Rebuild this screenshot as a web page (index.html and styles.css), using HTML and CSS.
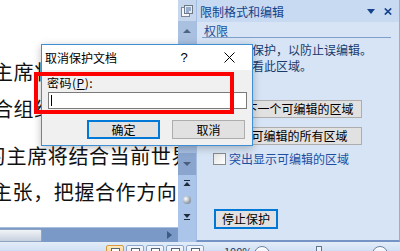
FILE: index.html
```html
<!DOCTYPE html>
<html>
<head>
<meta charset="utf-8">
<link rel="stylesheet" href="styles.css">
</head>
<body>
<div class="window">
  <div class="main">
    <div class="docwrap">
      <div class="doc">
        <div class="line l1">主席将出席上海合作</div>
        <div class="line l2">合组织成员国元首理事</div>
        <div class="line l3">习主席将结合当前世界</div>
        <div class="line l4">主张，把握合作方向，</div>
      </div>
      <div class="hscroll">
        <div class="hthumb"></div>
        <div class="harrow"></div>
      </div>
    </div>
    <div class="vscroll">
      <div class="vs-top">
        <svg width="12" height="12" viewBox="0 0 12 12">
          <rect x="0.5" y="2.5" width="8" height="9" fill="#f4f6f9" stroke="#7d8794"/>
          <rect x="3.5" y="0.5" width="8" height="8" fill="#e6ebf2" stroke="#6f7a88"/>
          <path d="M5 3h5M5 5h5M5 7h3" stroke="#4a6fa5" stroke-width="1"/>
        </svg>
      </div>
      <div class="vs-up"><div class="tri-up"></div></div>
      <div class="vs-track"></div>
      <div class="vs-down"><div class="tri-down"></div></div>
      <div class="vs-browse">
        <svg class="br br-prev" width="8" height="7" viewBox="0 0 8 7">
          <rect x="1" y="0" width="6" height="1" fill="#1d2a3a"/>
          <path d="M4 2L7.5 6H0.5Z" fill="#1d2a3a"/>
        </svg>
        <div class="br-dot"></div>
        <svg class="br br-next" width="8" height="7" viewBox="0 0 8 7">
          <path d="M0.5 0H7.5L4 4Z" fill="#1d2a3a"/>
          <rect x="1" y="5" width="6" height="1" fill="#1d2a3a"/>
        </svg>
      </div>
    </div>
    <div class="panel">
      <div class="ptitle">
        <span class="ptitle-text">限制格式和编辑</span>
        <span class="pt-menu"></span>
        <svg class="pt-close" width="8" height="7" viewBox="0 0 8 7">
          <path d="M0.8 0.5L7.2 6.5M7.2 0.5L0.8 6.5" stroke="#15428b" stroke-width="1.7"/>
        </svg>
      </div>
      <div class="psec">权限</div>
      <div class="ptext">
        <div>此文档受保护，以防止误编辑。</div>
        <div>您只能查看此区域。</div>
      </div>
      <button class="pbtn pbtn1">查找下一个可编辑的区域</button>
      <button class="pbtn pbtn2">显示可编辑的所有区域</button>
      <div class="pcheck">
        <span class="chk"></span>
        <span class="chk-label">突出显示可编辑的区域</span>
      </div>
      <button class="stopbtn">停止保护</button>
    </div>
  </div>
  <div class="status">
    <div class="st-left"></div>
    <div class="st-views">
      <div class="view on"><div class="vi"></div></div>
      <div class="view"><div class="vi"></div></div>
      <div class="view"><div class="vi"></div></div>
      <div class="view"><div class="vi"></div></div>
      <div class="view"><div class="vi"></div></div>
    </div>
    <div class="st-zoom">
      <span class="zt">100%</span>
      <span class="zc"></span>
      <span class="zthumb"></span>
      <span class="zc zc2"></span>
    </div>
  </div>
</div>

<div class="dialog">
  <div class="dtitle">
    <span class="dtitle-text">取消保护文档</span>
    <span class="dhelp">?</span>
    <span class="dclose">
      <svg width="11" height="11" viewBox="0 0 11 11">
        <path d="M0.5 0.5L10.5 10.5M10.5 0.5L0.5 10.5" stroke="#000" stroke-width="1"/>
      </svg>
    </span>
  </div>
  <div class="dbody">
    <div class="dlabel">密码(<u>P</u>):</div>
    <div class="dinput"><div class="caret"></div></div>
    <div class="dbtns">
      <button class="dbtn dbtn-default">确定</button>
      <button class="dbtn">取消</button>
    </div>
  </div>
</div>

<div class="highlight"></div>
</body>
</html>
```

FILE: styles.css
```css
* { box-sizing: border-box; }
html, body { margin: 0; padding: 0; }
body {
  width: 400px;
  height: 251px;
  overflow: hidden;
  position: relative;
  font-family: "Noto Sans CJK SC", "Noto Sans", sans-serif;
  background: #d6e4f5;
}
button { font-family: inherit; padding: 0; margin: 0; cursor: default; }

.window { display: flex; flex-direction: column; width: 400px; height: 251px; }
.main { display: flex; height: 242px; background: #d6e4f5; }

/* document */
.docwrap { width: 178px; display: flex; flex-direction: column; }
.doc { flex: 1; background: #fff; overflow: hidden; padding-top: 62px; }
.line {
  font-size: 20px;
  line-height: 20px;
  height: 20px;
  white-space: nowrap;
  letter-spacing: 0.6px;
  color: #111;
}
.l1 { margin-left: -7px; }
.l2 { margin-left: -7px; margin-top: 17px; }
.l3 { margin-left: -14px; margin-top: 27px; }
.l4 { margin-left: -8px; margin-top: 16px; }

.hscroll {
  height: 15px;
  background: #7a99c6;
  border-top: 1px solid #a9bfdf;
  display: flex;
  align-items: center;
}
.hthumb {
  width: 42px;
  height: 13px;
  background: linear-gradient(#f1f4f8, #c6d0dd);
  border: 1px solid #8ea4c2;
  border-left: none;
  border-radius: 0 2px 2px 0;
}
.harrow {
  margin-left: auto;
  margin-right: 6px;
  width: 0;
  height: 0;
  border-top: 4px solid transparent;
  border-bottom: 4px solid transparent;
  border-left: 5px solid #3d5a80;
}

/* vertical scrollbar */
.vscroll { width: 18px; display: flex; flex-direction: column; background: #a6bee0; }
.vs-top { height: 21px; background: #c6d6ec; display: flex; align-items: center; justify-content: center; }
.vs-up { height: 20px; background: #a9c0e0; display: flex; align-items: center; justify-content: center; }
.tri-up { width: 0; height: 0; border-left: 4px solid transparent; border-right: 4px solid transparent; border-bottom: 4px solid #4f6482; }
.vs-track { flex: 1; background: #a6bee0; }
.vs-down { height: 22px; background: #8aa6cf; display: flex; align-items: center; justify-content: center; }
.tri-down { width: 0; height: 0; border-left: 4px solid transparent; border-right: 4px solid transparent; border-top: 4px solid #4a5f80; }
.vs-browse {
  height: 67px;
  background: #abc5ea;
  display: flex;
  flex-direction: column;
  align-items: center;
  padding-top: 5px;
}
.br-dot {
  width: 8px;
  height: 8px;
  border-radius: 50%;
  margin-top: 9px;
  background: radial-gradient(circle at 35% 35%, #ffffff, #9aa3ad 60%, #5d6772);
}
.br-next { margin-top: 10px; }

/* task pane */
.panel {
  flex: 1;
  background: #d6e4f5;
  border-left: 1px solid #a5bfe2;
  border-right: 1px solid #93afd8;
  border-bottom: 2px solid #7593c4;
  display: flex;
  flex-direction: column;
}
.ptitle {
  height: 22px;
  display: flex;
  align-items: center;
  padding: 0 7px 0 3px;
  background: #c8daf1;
  color: #15428b;
  font-size: 12px;
}
.ptitle-text { flex: 1; }
.pt-menu {
  width: 0;
  height: 0;
  border-left: 4px solid transparent;
  border-right: 4px solid transparent;
  border-top: 5px solid #15428b;
  margin-right: 9px;
}
.psec {
  margin: 2px 8px 0 5px;
  padding-left: 2px;
  height: 14px;
  font-size: 12px;
  line-height: 13px;
  color: #1d4f9a;
  border-bottom: 1px solid #7f9fcb;
}
.ptext {
  margin: 4px 0 0 7px;
  font-size: 12px;
  line-height: 16px;
  color: #1a3a6a;
  white-space: nowrap;
}
.pbtn {
  display: block;
  margin-left: 16px;
  width: 149px;
  height: 18px;
  background: #e1e1e1;
  border: 1px solid #adadad;
  font-size: 12px;
  line-height: 16px;
  text-align: center;
  color: #000;
}
.pbtn1 { margin-top: 26px; }
.pbtn2 { margin-top: 9px; }
.pcheck { display: flex; align-items: center; margin: 7px 0 0 16px; height: 13px; }
.chk {
  width: 13px;
  height: 12px;
  border: 1px solid #8a8a8a;
  background: linear-gradient(135deg, #e4e4e4, #ffffff);
}
.chk-label { margin-left: 3px; font-size: 12px; line-height: 13px; color: #1c4fa1; }
.stopbtn {
  display: block;
  margin: 44px 0 0 17px;
  width: 64px;
  height: 20px;
  background: #e1e1e1;
  border: 2px solid #0078d7;
  font-size: 12px;
  line-height: 16px;
  color: #000;
}

/* status bar */
.status {
  height: 9px;
  background: linear-gradient(#e3edf8, #d0e0f4);
  display: flex;
  overflow: hidden;
}
.st-left { width: 106px; }
.st-views { display: flex; gap: 2px; padding-top: 3px; }
.view {
  width: 18px;
  height: 10px;
  border: 1px solid #8ca6cb;
  border-radius: 2px 2px 0 0;
  background: linear-gradient(#f4f7fb, #dbe6f3);
  display: flex;
  justify-content: center;
  padding-top: 2px;
}
.view.on { background: linear-gradient(#fde9c2, #f7cf85); border-color: #d39a3e; }
.vi { width: 9px; height: 8px; border: 1px solid #55657a; border-bottom: none; background: #fff; }
.st-zoom { flex: 1; display: flex; align-items: flex-start; padding-top: 3px; }
.zt { margin-left: 20px; font-size: 11px; line-height: 12px; color: #2a3d58; }
.zc {
  margin-left: 2px;
  margin-top: 1px;
  width: 16px;
  height: 16px;
  border-radius: 50%;
  border: 1px solid #6a82a6;
  background: linear-gradient(#ffffff, #c9d6e8);
}
.zthumb {
  margin-left: 46px;
  margin-top: 1px;
  width: 6px;
  height: 10px;
  border: 1px solid #5f7597;
  background: #eef3fa;
}
.zc2 { margin-left: 50px; }

/* dialog */
.dialog {
  position: absolute;
  left: 41px;
  top: 44px;
  width: 212px;
  height: 102px;
  border: 1px solid #3f8fd5;
  background: #f0f0f0;
  box-shadow: 0 2px 8px rgba(0, 0, 0, 0.25);
  display: flex;
  flex-direction: column;
}
.dtitle {
  height: 25px;
  background: #fff;
  display: flex;
  align-items: center;
  padding-left: 3px;
  font-size: 12px;
  color: #000;
}
.dtitle-text { flex: 1; }
.dhelp { width: 30px; text-align: center; margin-right: 7px; font-size: 13px; font-family: "Liberation Sans", sans-serif; }
.dclose { width: 46px; height: 25px; display: flex; align-items: center; justify-content: center; }
.dbody { flex: 1; padding: 6px 7px 0 5px; }
.dlabel { font-size: 12px; line-height: 13px; color: #000; letter-spacing: 0.5px; }
.dinput {
  margin: 3px 0 0 1px;
  width: 199px;
  height: 17px;
  background: #fff;
  border: 1px solid #7a7a7a;
  padding: 1px 0 0 2px;
}
.caret { width: 1px; height: 11px; background: #000; margin-top: 1px; }
.dbtns { display: flex; justify-content: flex-end; gap: 12px; margin-top: 11px; }
.dbtn {
  width: 73px;
  height: 19px;
  background: #e1e1e1;
  border: 1px solid #adadad;
  font-size: 12px;
  line-height: 15px;
  color: #000;
}
.dbtn-default { border: 2px solid #0078d7; }

/* annotation */
.highlight {
  position: absolute;
  left: 34px;
  top: 72px;
  width: 200px;
  height: 42px;
  border: 4px solid #ff0000;
}
```
